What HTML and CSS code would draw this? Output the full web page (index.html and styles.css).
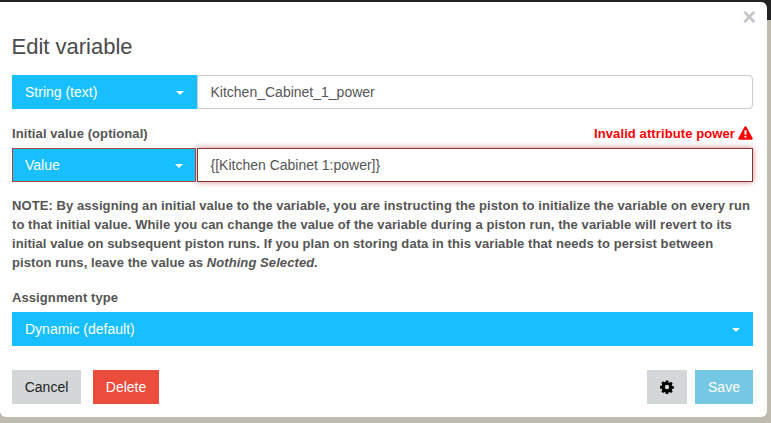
FILE: index.html
```html
<!DOCTYPE html>
<html lang="en">
<head>
    <meta charset="UTF-8" />
    <title>Edit variable</title>
    <link rel="stylesheet" href="styles.css">
</head>
<body>
    <div class="modal">
        <div class="close-row"><span class="close">&times;</span></div>
        <h4 class="title">Edit variable</h4>

        <div class="group">
            <div class="picker">String (text)<span class="caret"></span></div>
            <div class="field">Kitchen_Cabinet_1_power</div>
        </div>

        <div class="label-row">
            <label>Initial value (optional)</label>
            <span class="invalid">Invalid attribute power
                <svg class="warn" width="15" height="14" viewBox="0 0 15 14">
                    <path fill="#f00" fill-rule="evenodd" d="M7.5.3c.5 0 .9.3 1.1.7l6 11c.4.8-.1 1.7-1 1.7H1.4c-.9 0-1.4-.9-1-1.7l6-11c.2-.4.6-.7 1.1-.7zM6.4 4.2l.2 4.6h1.8l.2-4.6H6.4zm1.1 5.6c-.6 0-1 .4-1 1s.4 1 1 1 1-.4 1-1-.4-1-1-1z"/>
                </svg>
            </span>
        </div>
        <div class="group has-error">
            <div class="picker">Value<span class="caret"></span></div>
            <div class="field">{[Kitchen Cabinet 1:power]}</div>
        </div>

        <p class="note">NOTE: By assigning an initial value to the variable, you are instructing the piston to initialize the variable on every run to that initial value. While you can change the value of the variable during a piston run, the variable will revert to its initial value on subsequent piston runs. If you plan on storing data in this variable that needs to persist between piston runs, leave the value as <em>Nothing Selected.</em></p>

        <label class="assign-label">Assignment type</label>
        <div class="picker wide">Dynamic (default)<span class="caret"></span></div>

        <div class="footer">
            <div class="btn-set">
                <button class="btn btn-grey btn-cancel">Cancel</button>
                <button class="btn btn-red">Delete</button>
            </div>
            <div class="btn-set tight">
                <button class="btn btn-grey btn-gear">
                    <svg width="14" height="14" viewBox="0 0 14 14">
                        <path fill="#000" fill-rule="evenodd" d="M5.8.5h2.4l.3 1.8 1 .4 1.5-1 1.7 1.7-1 1.5.4 1 1.8.3v2.4l-1.8.3-.4 1 1 1.5-1.7 1.7-1.5-1-1 .4-.3 1.8H5.8l-.3-1.8-1-.4-1.5 1-1.7-1.7 1-1.5-.4-1-1.8-.3V5.8l1.8-.3.4-1-1-1.5 1.7-1.7 1.5 1 1-.4zM7 4.8a2.2 2.2 0 1 0 0 4.4 2.2 2.2 0 0 0 0-4.4z"/>
                    </svg>
                </button>
                <button class="btn btn-save">Save</button>
            </div>
        </div>
    </div>
</body>
</html>
```

FILE: styles.css
```css
html, body {
    height: 100%;
}

body {
    margin: 0;
    overflow: hidden;
    padding-top: 2px;
    box-sizing: border-box;
    font-family: "Liberation Sans", Arial, sans-serif;
    background: linear-gradient(#222 20px, #bfbbb0 20px);
}

.modal {
    width: 767px;
    height: 415px;
    box-sizing: border-box;
    padding: 0 14px 0 12px;
    background-color: #fff;
    border-radius: 0 6px 6px 6px;
}

.close-row {
    display: flex;
    justify-content: flex-end;
    height: 32px;
}

.close {
    margin: -1px -3px 0 0;
    font-size: 23px;
    line-height: 32px;
    font-weight: bold;
    color: #c4c4c4;
}

.title {
    margin: 0 0 16px -0.5px;
    font-size: 22px;
    line-height: 25px;
    font-weight: normal;
    color: #4a4a4a;
}

.group {
    display: flex;
    height: 34px;
}

.picker {
    position: relative;
    display: flex;
    align-items: center;
    box-sizing: border-box;
    width: 185px;
    height: 34px;
    padding-left: 13px;
    font-size: 14px;
    color: #fff;
    background-color: #17bfff;
}

.picker.wide {
    width: 100%;
}

.caret {
    position: absolute;
    right: 13px;
    top: 16px;
    border-top: 4px solid #fff;
    border-left: 4px solid transparent;
    border-right: 4px solid transparent;
}

.field {
    flex: 1;
    display: flex;
    align-items: center;
    box-sizing: border-box;
    padding-left: 12.5px;
    font-size: 14px;
    color: #555;
    border: 1px solid #ccc;
    border-radius: 0 4px 4px 0;
}

.label-row {
    display: flex;
    justify-content: space-between;
    align-items: center;
    height: 20px;
    margin: 14px 0 5px;
}

label {
    font-size: 13px;
    font-weight: bold;
    letter-spacing: 0.09px;
    color: #555;
}

.invalid {
    display: flex;
    align-items: center;
    gap: 3px;
    font-size: 13px;
    font-weight: bold;
    letter-spacing: 0.1px;
    color: #f00;
}

.has-error .picker {
    border: 1px solid #a94442;
    width: 184px;
    padding-left: 12px;
}

.has-error .picker .caret {
    right: 12px;
    top: 15px;
}

.has-error .field {
    margin-left: 1px;
    border-color: #843534;
    border-radius: 0;
    box-shadow: 0 0 6px #ce8483;
}

.note {
    margin: 14px 0 17px;
    font-size: 13px;
    line-height: 19px;
    font-weight: bold;
    letter-spacing: 0.08px;
    color: #555;
}

.assign-label {
    display: block;
    line-height: 17px;
    margin-bottom: 6px;
}

.footer {
    display: flex;
    justify-content: space-between;
    margin-top: 24px;
}

.btn-set {
    display: flex;
    gap: 12px;
}

.btn-set.tight {
    gap: 8px;
}

.btn {
    height: 34px;
    padding: 0 13px;
    border: none;
    font-family: inherit;
    font-size: 14px;
}

.btn-cancel {
    width: 69px;
    padding: 0;
}

.btn-grey {
    color: #222;
    background-color: #d3d7d8;
}

.btn-red {
    width: 66px;
    padding: 0;
    color: #fff;
    background-color: #ec4c3c;
}

.btn-gear {
    display: flex;
    align-items: center;
}

.btn-save {
    width: 58px;
    padding: 0;
    color: #fff;
    background-color: #75c8e3;
}
```
